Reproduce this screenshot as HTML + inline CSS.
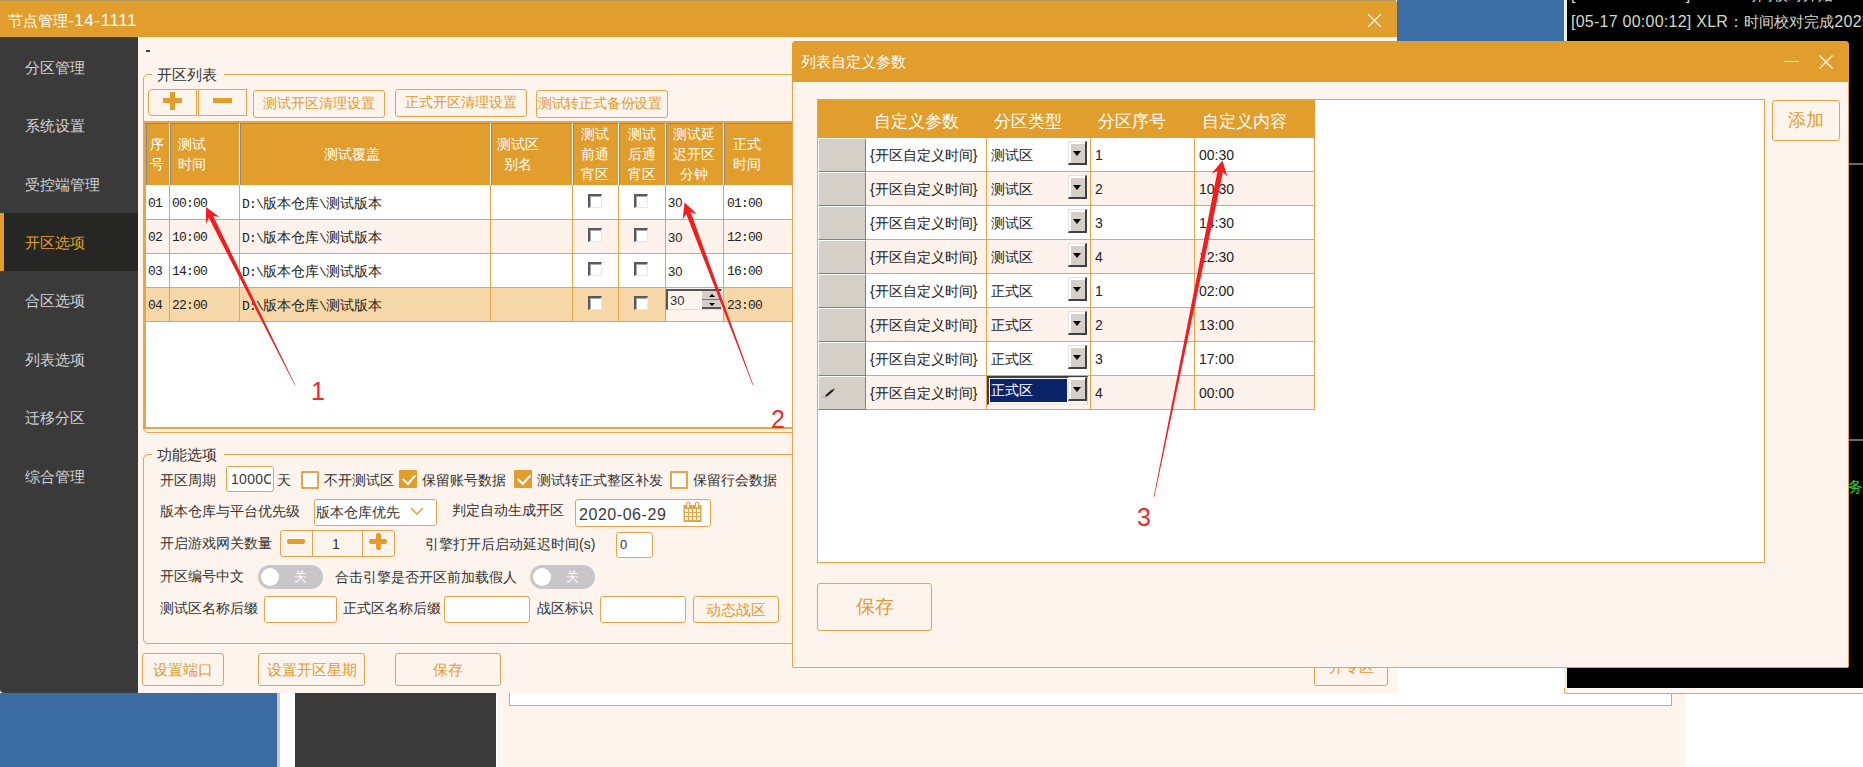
<!DOCTYPE html>
<html><head><meta charset="utf-8">
<style>
*{box-sizing:border-box;margin:0;padding:0}
html,body{width:1863px;height:767px;overflow:hidden}
body{position:relative;background:#fff;font-family:"Liberation Sans",sans-serif;color:#333}
.a{position:absolute}
.or{background:#E29E2C}
.pe{background:#FDF4EE}
.t{position:absolute;white-space:nowrap;line-height:1}
.btn{position:absolute;border:1px solid #E6A54A;border-radius:3px;background:#FDF4EE;color:#E39C30;font-size:14px;text-align:center;white-space:nowrap}
.side{position:absolute;left:25px;color:#d2d2d2;font-size:15px;white-space:nowrap;line-height:1}
.ms{font-family:"Liberation Mono",monospace;font-size:13px;letter-spacing:-0.8px;color:#222}
.ms i{font-style:normal;letter-spacing:0;font-size:14px}
.cb{position:absolute;width:14px;height:14px;background:#fff;border-top:2px solid #5a5a5a;border-left:2px solid #5a5a5a;border-right:1px solid #e8e8e8;border-bottom:1px solid #e8e8e8;box-shadow:inset 1px 1px 0 #aaa}
.lb{position:absolute;white-space:nowrap;line-height:1;font-size:14px;color:#333}
.inp{position:absolute;background:#fff;border:1px solid #E6A54A;border-radius:3px}
.ocb{position:absolute;width:18px;height:18px;border:2px solid #E6A54A;border-radius:1px;background:#fff}
.ocb.on{background:#E29E2C;border-color:#E29E2C}
.ocb.on::after{content:"";position:absolute;left:4px;top:0px;width:6px;height:10px;border-right:2.5px solid #fff;border-bottom:2.5px solid #fff;transform:rotate(42deg)}
.tg{position:absolute;width:65px;height:24px;border-radius:12px;background:#C8C6C8;color:#fff;font-size:13px;line-height:24px;text-align:right;padding-right:16px}
.tg span{position:absolute;left:3px;top:3px;width:18px;height:18px;border-radius:9px;background:#fff}
.gt{position:absolute;white-space:nowrap;line-height:1;font-size:14px;color:#222}
.dd{position:absolute;width:19px;height:24px;background:#D4D0C8;border-top:1px solid #e4e2dc;border-left:1px solid #e4e2dc;border-right:2px solid #404040;border-bottom:2px solid #404040;box-shadow:inset 2px 2px 0 #fff}
.dd::after{content:"";position:absolute;left:4px;top:9px;border-left:4px solid transparent;border-right:4px solid transparent;border-top:5px solid #000}
</style></head><body>

<!-- desktop background -->
<div class="a" style="left:1397px;top:0;width:167px;height:41px;background:#3A6EA5"></div>
<div class="a" style="left:1564px;top:0;width:3px;height:692px;background:#f3eee2"></div>
<div class="a" style="left:1567px;top:0;width:296px;height:688px;background:#000"></div>
<div class="t" style="left:1571px;top:-13px;font-size:16px;letter-spacing:0.25px;color:#d8d8c8">[05-17 00:00:11] XLR：<span style="font-size:15px;letter-spacing:0">时间校对开始2025</span></div>
<div class="t" style="left:1571px;top:14px;font-size:16px;letter-spacing:0.25px;color:#d8d8c8">[05-17 00:00:12] XLR：<span style="font-size:15px;letter-spacing:0">时间校对完成</span>2025</div>
<div class="a" style="left:1848px;top:163px;width:15px;height:2px;background:#6a6a6a"></div>
<div class="a" style="left:1848px;top:439px;width:15px;height:2px;background:#6a6a6a"></div>
<div class="t" style="left:1848px;top:479px;font-size:15px;color:#22dd22">务器</div>

<!-- bottom strip -->
<div class="a" style="left:0;top:693px;width:277px;height:74px;background:#3A6CA3"></div>
<div class="a" style="left:277px;top:693px;width:3px;height:74px;background:#c9c9c9"></div>
<div class="a" style="left:280px;top:693px;width:15px;height:74px;background:#fff"></div>
<div class="a" style="left:295px;top:693px;width:201px;height:74px;background:#3A3A3A"></div>
<div class="a" style="left:497px;top:693px;width:1188px;height:74px;background:#FDF4EE"></div>
<div class="a" style="left:509px;top:693px;width:1163px;height:13px;background:#fff;border:1px solid #E6A54A;border-top:none"></div>

<div class="a" style="left:1564px;top:688px;width:299px;height:6px;background:#FDF6F2;border-left:1px solid #E6A54A;border-bottom:1px solid #E6A54A;border-bottom-left-radius:3px"></div>
<!-- main window -->
<div class="a or" style="left:0;top:0;width:1397px;height:37px;border-top-right-radius:3px"></div>
<div class="a" style="left:0;top:0;width:1396px;height:1px;background:#b89a5e"></div>
<div class="t" style="left:8px;top:12px;font-size:15px;color:#fff">节点管理<span style="font-size:17px;letter-spacing:0.6px">-14-1111</span></div>
<svg class="a" style="left:1367px;top:13px" width="15" height="15"><path d="M1 1L14 14M14 1L1 14" stroke="#fff" stroke-width="1.1" opacity="0.92"/></svg>
<div class="a" style="left:0;top:37px;width:138px;height:656px;border-bottom-left-radius:4px;background:#3A3A3A"></div>
<div class="a pe" style="left:138px;top:37px;width:1259px;height:656px;border-bottom-left-radius:0"></div>

<div class="side" style="top:60px">分区管理</div>
<div class="side" style="top:118px">系统设置</div>
<div class="side" style="top:177px">受控端管理</div>
<div class="a" style="left:0;top:213px;width:138px;height:58px;background:#262624"></div>
<div class="a or" style="left:0;top:213px;width:4px;height:58px"></div>
<div class="side" style="top:235px;color:#E29E2C">开区选项</div>
<div class="side" style="top:293px">合区选项</div>
<div class="side" style="top:352px">列表选项</div>
<div class="side" style="top:410px">迁移分区</div>
<div class="side" style="top:469px">综合管理</div>


<!-- content: -->
<div class="a" style="left:146px;top:50px;width:4px;height:2px;background:#444"></div>

<!-- group 开区列表 -->
<div class="a" style="left:143px;top:74px;width:660px;height:359px;border:1px solid #E6A54A;border-radius:5px"></div>
<div class="a pe" style="left:152px;top:66px;width:72px;height:14px"></div>
<div class="t" style="left:157px;top:67px;font-size:15px;color:#333">开区列表</div>

<!-- +/- buttons -->
<div class="a" style="left:148px;top:89px;width:49px;height:27px;border:1px solid #E6A54A;border-radius:4px 0 0 4px"></div>
<div class="a" style="left:198px;top:89px;width:49px;height:27px;border:1px solid #E6A54A;border-radius:0 0 0 0"></div>
<div class="a or" style="left:163px;top:98px;width:19px;height:5px"></div>
<div class="a or" style="left:170px;top:92px;width:5px;height:18px"></div>
<div class="a or" style="left:213px;top:98px;width:19px;height:5px"></div>

<div class="btn" style="left:253px;top:90px;width:132px;height:28px;font-size:14.2px;line-height:25px">测试开区清理设置</div>
<div class="btn" style="left:395px;top:89px;width:132px;height:28px;font-size:14.2px;line-height:25px">正式开区清理设置</div>
<div class="btn" style="left:536px;top:90px;width:132px;height:28px;font-size:14.2px;line-height:25px;letter-spacing:-0.2px;overflow:hidden;text-indent:-4px">测试转正式备份设置</div>

<!-- main table -->
<div class="a" style="left:143px;top:121px;width:660px;height:308px;background:#fff;border:2px solid #E6A54A;border-left:3px solid #E6A54A"></div>
<div class="a or" style="left:145px;top:123px;width:650px;height:62px;border-top:1px solid #8a8a8a"></div>
<div class="a" style="left:146px;top:123px;width:1px;height:62px;background:#8a8a8a"></div>
<div class="a" style="left:169px;top:123px;width:1px;height:62px;background:#fff"></div>
<div class="a" style="left:170px;top:123px;width:1px;height:62px;background:#8a8a8a"></div>
<div class="a" style="left:239px;top:123px;width:1px;height:62px;background:#fff"></div>
<div class="a" style="left:240px;top:123px;width:1px;height:62px;background:#8a8a8a"></div>
<div class="a" style="left:490px;top:123px;width:1px;height:62px;background:#fff"></div>
<div class="a" style="left:491px;top:123px;width:1px;height:62px;background:#8a8a8a"></div>
<div class="a" style="left:572px;top:123px;width:1px;height:62px;background:#fff"></div>
<div class="a" style="left:573px;top:123px;width:1px;height:62px;background:#8a8a8a"></div>
<div class="a" style="left:618px;top:123px;width:1px;height:62px;background:#fff"></div>
<div class="a" style="left:619px;top:123px;width:1px;height:62px;background:#8a8a8a"></div>
<div class="a" style="left:665px;top:123px;width:1px;height:62px;background:#fff"></div>
<div class="a" style="left:666px;top:123px;width:1px;height:62px;background:#8a8a8a"></div>
<div class="a" style="left:723px;top:123px;width:1px;height:62px;background:#fff"></div>
<div class="a" style="left:724px;top:123px;width:1px;height:62px;background:#8a8a8a"></div>
<div class="a" style="left:146px;top:185px;width:649px;height:35px;background:#fff;border-bottom:1px solid #E6A54A"></div>
<div class="a" style="left:146px;top:220px;width:649px;height:34px;background:#FDF3EC;border-bottom:1px solid #E6A54A"></div>
<div class="a" style="left:146px;top:254px;width:649px;height:34px;background:#fff;border-bottom:1px solid #E6A54A"></div>
<div class="a" style="left:146px;top:288px;width:649px;height:34px;background:#F6D8A8;border-bottom:1px solid #E6A54A"></div>
<div class="a" style="left:169px;top:185px;width:1px;height:137px;background:#E6A54A"></div>
<div class="a" style="left:239px;top:185px;width:1px;height:137px;background:#E6A54A"></div>
<div class="a" style="left:490px;top:185px;width:1px;height:137px;background:#E6A54A"></div>
<div class="a" style="left:572px;top:185px;width:1px;height:137px;background:#E6A54A"></div>
<div class="a" style="left:618px;top:185px;width:1px;height:137px;background:#E6A54A"></div>
<div class="a" style="left:665px;top:185px;width:1px;height:137px;background:#E6A54A"></div>
<div class="a" style="left:723px;top:185px;width:1px;height:137px;background:#E6A54A"></div>
<div class="t" style="left:117px;width:80px;text-align:center;top:137px;font-size:14px;color:#fff">序</div>
<div class="t" style="left:117px;width:80px;text-align:center;top:157px;font-size:14px;color:#fff">号</div>
<div class="t" style="left:152px;width:80px;text-align:center;top:137px;font-size:14px;color:#fff">测试</div>
<div class="t" style="left:152px;width:80px;text-align:center;top:157px;font-size:14px;color:#fff">时间</div>
<div class="t" style="left:312px;width:80px;text-align:center;top:147px;font-size:14px;color:#fff">测试覆盖</div>
<div class="t" style="left:478px;width:80px;text-align:center;top:137px;font-size:14px;color:#fff">测试区</div>
<div class="t" style="left:478px;width:80px;text-align:center;top:157px;font-size:14px;color:#fff">别名</div>
<div class="t" style="left:555px;width:80px;text-align:center;top:127px;font-size:14px;color:#fff">测试</div>
<div class="t" style="left:555px;width:80px;text-align:center;top:147px;font-size:14px;color:#fff">前通</div>
<div class="t" style="left:555px;width:80px;text-align:center;top:167px;font-size:14px;color:#fff">宵区</div>
<div class="t" style="left:602px;width:80px;text-align:center;top:127px;font-size:14px;color:#fff">测试</div>
<div class="t" style="left:602px;width:80px;text-align:center;top:147px;font-size:14px;color:#fff">后通</div>
<div class="t" style="left:602px;width:80px;text-align:center;top:167px;font-size:14px;color:#fff">宵区</div>
<div class="t" style="left:654px;width:80px;text-align:center;top:127px;font-size:14px;color:#fff">测试延</div>
<div class="t" style="left:654px;width:80px;text-align:center;top:147px;font-size:14px;color:#fff">迟开区</div>
<div class="t" style="left:654px;width:80px;text-align:center;top:167px;font-size:14px;color:#fff">分钟</div>
<div class="t" style="left:707px;width:80px;text-align:center;top:137px;font-size:14px;color:#fff">正式</div>
<div class="t" style="left:707px;width:80px;text-align:center;top:157px;font-size:14px;color:#fff">时间</div>
<div class="t ms" style="left:148px;top:197px">01</div>
<div class="t ms" style="left:172px;top:197px">00:00</div>
<div class="t ms" style="left:242px;top:197px">D:\<i>版本仓库</i>\<i>测试版本</i></div>
<div class="t ms" style="left:668px;top:196px;font-family:'Liberation Sans',sans-serif;font-size:13px;letter-spacing:0">30</div>
<div class="t ms" style="left:727px;top:197px">01:00</div>
<div class="cb" style="left:588px;top:194px"></div>
<div class="cb" style="left:634px;top:194px"></div>
<div class="t ms" style="left:148px;top:231px">02</div>
<div class="t ms" style="left:172px;top:231px">10:00</div>
<div class="t ms" style="left:242px;top:231px">D:\<i>版本仓库</i>\<i>测试版本</i></div>
<div class="t ms" style="left:668px;top:231px;font-family:'Liberation Sans',sans-serif;font-size:13px;letter-spacing:0">30</div>
<div class="t ms" style="left:727px;top:231px">12:00</div>
<div class="cb" style="left:588px;top:228px"></div>
<div class="cb" style="left:634px;top:228px"></div>
<div class="t ms" style="left:148px;top:265px">03</div>
<div class="t ms" style="left:172px;top:265px">14:00</div>
<div class="t ms" style="left:242px;top:265px">D:\<i>版本仓库</i>\<i>测试版本</i></div>
<div class="t ms" style="left:668px;top:265px;font-family:'Liberation Sans',sans-serif;font-size:13px;letter-spacing:0">30</div>
<div class="t ms" style="left:727px;top:265px">16:00</div>
<div class="cb" style="left:588px;top:262px"></div>
<div class="cb" style="left:634px;top:262px"></div>
<div class="t ms" style="left:148px;top:299px">04</div>
<div class="t ms" style="left:172px;top:299px">22:00</div>
<div class="t ms" style="left:242px;top:299px">D:\<i>版本仓库</i>\<i>测试版本</i></div>
<div class="t ms" style="left:727px;top:299px">23:00</div>
<div class="cb" style="left:588px;top:296px"></div>
<div class="cb" style="left:634px;top:296px"></div>
<div class="a" style="left:666px;top:288px;width:57px;height:33px;background:#FDF4EE"></div>
<div class="a" style="left:666px;top:289px;width:56px;height:21px;background:#FDF4EE;border-top:2px solid #555;border-left:2px solid #555;border-right:1px solid #ddd;border-bottom:1px solid #ddd"></div>
<div class="t" style="left:670px;top:294px;font-size:13px;color:#333">30</div>
<div class="a" style="left:702px;top:291px;width:19px;height:9px;background:#d4d0c8;border-bottom:1px solid #777"></div>
<div class="a" style="left:702px;top:300px;width:19px;height:9px;background:#d4d0c8;border-bottom:2px solid #555"></div>
<div class="a" style="left:709px;top:294px;width:0;height:0;border-left:3px solid transparent;border-right:3px solid transparent;border-bottom:3px solid #000"></div>
<div class="a" style="left:709px;top:303px;width:0;height:0;border-left:3px solid transparent;border-right:3px solid transparent;border-top:3px solid #000"></div>

<!-- group 功能选项 -->
<div class="a" style="left:143px;top:454px;width:660px;height:190px;border:1px solid #E6A54A;border-radius:5px"></div>
<div class="a pe" style="left:152px;top:446px;width:72px;height:14px"></div>
<div class="t" style="left:157px;top:447px;font-size:15px;color:#333">功能选项</div>

<div class="lb" style="left:160px;top:473px">开区周期</div>
<div class="inp" style="left:226px;top:466px;width:48px;height:26px"></div>
<div class="t" style="left:231px;top:472px;width:40px;overflow:hidden;font-size:14px;color:#3a3a3a;letter-spacing:0.3px">1000C</div>
<div class="lb" style="left:277px;top:473px">天</div>
<div class="ocb" style="left:301px;top:471px"></div>
<div class="lb" style="left:324px;top:473px">不开测试区</div>
<div class="ocb on" style="left:399px;top:470px"></div>
<div class="lb" style="left:422px;top:473px">保留账号数据</div>
<div class="ocb on" style="left:514px;top:470px"></div>
<div class="lb" style="left:537px;top:473px">测试转正式整区补发</div>
<div class="ocb" style="left:670px;top:471px"></div>
<div class="lb" style="left:693px;top:473px">保留行会数据</div>

<div class="lb" style="left:160px;top:504px">版本仓库与平台优先级</div>
<div class="inp" style="left:314px;top:499px;width:123px;height:27px"></div>
<div class="t" style="left:316px;top:505px;font-size:14px;color:#333">版本仓库优先</div>
<svg class="a" style="left:409px;top:505px" width="16" height="12"><path d="M2 3 L8 9 L14 3" fill="none" stroke="#E6A54A" stroke-width="1.6"/></svg>
<div class="lb" style="left:452px;top:503px">判定自动生成开区</div>
<div class="inp" style="left:575px;top:499px;width:136px;height:28px"></div>
<div class="t" style="left:579px;top:507px;font-size:16px;color:#3a3a3a;letter-spacing:0.55px">2020-06-29</div>
<svg class="a" style="left:683px;top:501px" width="20" height="22"><rect x="0.5" y="4" width="18" height="17" fill="#E6A54A"/><g fill="#fff"><rect x="2" y="8" width="3" height="3"/><rect x="6" y="8" width="3" height="3"/><rect x="10" y="8" width="3" height="3"/><rect x="14" y="8" width="3" height="3"/><rect x="2" y="12" width="3" height="3"/><rect x="6" y="12" width="3" height="3"/><rect x="10" y="12" width="3" height="3"/><rect x="14" y="12" width="3" height="3"/><rect x="2" y="16" width="3" height="3"/><rect x="6" y="16" width="3" height="3"/><rect x="10" y="16" width="3" height="3"/><rect x="14" y="16" width="3" height="3"/></g><rect x="3.5" y="1" width="3" height="6" rx="1.5" fill="#fff" stroke="#E6A54A" stroke-width="1.2"/><rect x="12.5" y="1" width="3" height="6" rx="1.5" fill="#fff" stroke="#E6A54A" stroke-width="1.2"/></svg>

<div class="lb" style="left:160px;top:536px">开启游戏网关数量</div>
<div class="inp" style="left:280px;top:530px;width:115px;height:27px;background:#FDF4EE"></div>
<div class="a" style="left:312px;top:530px;width:1px;height:27px;background:#E6A54A"></div>
<div class="a" style="left:362px;top:530px;width:1px;height:27px;background:#E6A54A"></div>
<div class="a or" style="left:287px;top:539px;width:18px;height:5px;border-radius:2px"></div>
<div class="a or" style="left:369px;top:539px;width:18px;height:5px;border-radius:2px"></div>
<div class="a or" style="left:376px;top:533px;width:5px;height:17px;border-radius:2px"></div>
<div class="t" style="left:332px;top:537px;font-size:14px;color:#333">1</div>
<div class="lb" style="left:425px;top:537px">引擎打开后启动延迟时间(s)</div>
<div class="inp" style="left:616px;top:532px;width:37px;height:26px"></div>
<div class="t" style="left:620px;top:538px;font-size:13px;color:#333">0</div>

<div class="lb" style="left:160px;top:569px">开区编号中文</div>
<div class="tg" style="left:258px;top:565px"><span></span>关</div>
<div class="lb" style="left:335px;top:570px">合击引擎是否开区前加载假人</div>
<div class="tg" style="left:530px;top:565px"><span></span>关</div>

<div class="lb" style="left:160px;top:601px">测试区名称后缀</div>
<div class="inp" style="left:264px;top:596px;width:73px;height:27px"></div>
<div class="lb" style="left:343px;top:601px">正式区名称后缀</div>
<div class="inp" style="left:444px;top:596px;width:86px;height:27px"></div>
<div class="lb" style="left:537px;top:601px">战区标识</div>
<div class="inp" style="left:600px;top:596px;width:86px;height:27px"></div>
<div class="btn" style="left:693px;top:596px;width:86px;height:27px;line-height:25px;font-size:15px">动态战区</div>

<!-- bottom buttons -->
<div class="btn" style="left:142px;top:653px;width:82px;height:33px;line-height:31px;font-size:15px">设置端口</div>
<div class="btn" style="left:258px;top:653px;width:107px;height:33px;line-height:31px;font-size:15px">设置开区星期</div>
<div class="btn" style="left:395px;top:653px;width:106px;height:33px;line-height:31px;font-size:15px">保存</div>
<div class="btn" style="left:1314px;top:650px;width:74px;height:36px;line-height:31px;font-size:15px">开专区</div>

<!-- dialog -->
<div class="a pe" style="left:792px;top:41px;width:1057px;height:627px;border:1px solid #E6A54A;border-radius:4px 4px 2px 2px"></div>
<div class="a or" style="left:792px;top:41px;width:1057px;height:41px;border-radius:4px 4px 0 0"></div>
<div class="t" style="left:801px;top:54px;font-size:15px;color:#fff">列表自定义参数</div>
<div class="a" style="left:1784px;top:61px;width:15px;height:1px;background:#fff"></div>
<svg class="a" style="left:1819px;top:55px" width="14" height="14"><path d="M0.5 0.5L13.5 13.5M13.5 0.5L0.5 13.5" stroke="#fff" stroke-width="1.2"/></svg>
<div class="btn" style="left:1772px;top:100px;width:68px;height:41px;line-height:39px;font-size:18px">添加</div>
<div class="a" style="left:817px;top:99px;width:948px;height:464px;background:#fff;border:1px solid #E6A54A"></div>
<div class="a or" style="left:818px;top:100px;width:497px;height:38px"></div>
<div class="btn" style="left:817px;top:583px;width:115px;height:48px;line-height:46px;font-size:18.5px">保存</div>

<div class="t" style="left:874px;top:114px;font-size:16.7px;color:#fff">自定义参数</div>
<div class="t" style="left:994px;top:114px;font-size:16.7px;color:#fff">分区类型</div>
<div class="t" style="left:1098px;top:114px;font-size:16.7px;color:#fff">分区序号</div>
<div class="t" style="left:1202px;top:114px;font-size:16.7px;color:#fff">自定义内容</div>
<div class="a" style="left:866px;top:138px;width:449px;height:34px;background:#fff;border-bottom:1px solid #E6A54A;border-right:1px solid #E6A54A"></div>
<div class="a" style="left:818px;top:138px;width:48px;height:34px;background:#D4D0C8;border-left:1px solid #fff;border-top:1px solid #fff;border-right:1px solid #808080;border-bottom:1px solid #808080"></div>
<div class="a" style="left:986px;top:138px;width:1px;height:34px;background:#E6A54A"></div>
<div class="a" style="left:1090px;top:138px;width:1px;height:34px;background:#E6A54A"></div>
<div class="a" style="left:1194px;top:138px;width:1px;height:34px;background:#E6A54A"></div>
<div class="gt" style="left:870px;top:148px">{开区自定义时间}</div>
<div class="gt" style="left:991px;top:148px">测试区</div>
<div class="dd" style="left:1068px;top:141px"></div>
<div class="gt" style="left:1095px;top:148px">1</div>
<div class="gt" style="left:1199px;top:148px">00:30</div>
<div class="a" style="left:866px;top:172px;width:449px;height:34px;background:#FDF3EC;border-bottom:1px solid #E6A54A;border-right:1px solid #E6A54A"></div>
<div class="a" style="left:818px;top:172px;width:48px;height:34px;background:#D4D0C8;border-left:1px solid #fff;border-top:1px solid #fff;border-right:1px solid #808080;border-bottom:1px solid #808080"></div>
<div class="a" style="left:986px;top:172px;width:1px;height:34px;background:#E6A54A"></div>
<div class="a" style="left:1090px;top:172px;width:1px;height:34px;background:#E6A54A"></div>
<div class="a" style="left:1194px;top:172px;width:1px;height:34px;background:#E6A54A"></div>
<div class="gt" style="left:870px;top:182px">{开区自定义时间}</div>
<div class="gt" style="left:991px;top:182px">测试区</div>
<div class="dd" style="left:1068px;top:175px"></div>
<div class="gt" style="left:1095px;top:182px">2</div>
<div class="gt" style="left:1199px;top:182px">10:30</div>
<div class="a" style="left:866px;top:206px;width:449px;height:34px;background:#fff;border-bottom:1px solid #E6A54A;border-right:1px solid #E6A54A"></div>
<div class="a" style="left:818px;top:206px;width:48px;height:34px;background:#D4D0C8;border-left:1px solid #fff;border-top:1px solid #fff;border-right:1px solid #808080;border-bottom:1px solid #808080"></div>
<div class="a" style="left:986px;top:206px;width:1px;height:34px;background:#E6A54A"></div>
<div class="a" style="left:1090px;top:206px;width:1px;height:34px;background:#E6A54A"></div>
<div class="a" style="left:1194px;top:206px;width:1px;height:34px;background:#E6A54A"></div>
<div class="gt" style="left:870px;top:216px">{开区自定义时间}</div>
<div class="gt" style="left:991px;top:216px">测试区</div>
<div class="dd" style="left:1068px;top:209px"></div>
<div class="gt" style="left:1095px;top:216px">3</div>
<div class="gt" style="left:1199px;top:216px">14:30</div>
<div class="a" style="left:866px;top:240px;width:449px;height:34px;background:#FDF3EC;border-bottom:1px solid #E6A54A;border-right:1px solid #E6A54A"></div>
<div class="a" style="left:818px;top:240px;width:48px;height:34px;background:#D4D0C8;border-left:1px solid #fff;border-top:1px solid #fff;border-right:1px solid #808080;border-bottom:1px solid #808080"></div>
<div class="a" style="left:986px;top:240px;width:1px;height:34px;background:#E6A54A"></div>
<div class="a" style="left:1090px;top:240px;width:1px;height:34px;background:#E6A54A"></div>
<div class="a" style="left:1194px;top:240px;width:1px;height:34px;background:#E6A54A"></div>
<div class="gt" style="left:870px;top:250px">{开区自定义时间}</div>
<div class="gt" style="left:991px;top:250px">测试区</div>
<div class="dd" style="left:1068px;top:243px"></div>
<div class="gt" style="left:1095px;top:250px">4</div>
<div class="gt" style="left:1199px;top:250px">12:30</div>
<div class="a" style="left:866px;top:274px;width:449px;height:34px;background:#fff;border-bottom:1px solid #E6A54A;border-right:1px solid #E6A54A"></div>
<div class="a" style="left:818px;top:274px;width:48px;height:34px;background:#D4D0C8;border-left:1px solid #fff;border-top:1px solid #fff;border-right:1px solid #808080;border-bottom:1px solid #808080"></div>
<div class="a" style="left:986px;top:274px;width:1px;height:34px;background:#E6A54A"></div>
<div class="a" style="left:1090px;top:274px;width:1px;height:34px;background:#E6A54A"></div>
<div class="a" style="left:1194px;top:274px;width:1px;height:34px;background:#E6A54A"></div>
<div class="gt" style="left:870px;top:284px">{开区自定义时间}</div>
<div class="gt" style="left:991px;top:284px">正式区</div>
<div class="dd" style="left:1068px;top:277px"></div>
<div class="gt" style="left:1095px;top:284px">1</div>
<div class="gt" style="left:1199px;top:284px">02:00</div>
<div class="a" style="left:866px;top:308px;width:449px;height:34px;background:#FDF3EC;border-bottom:1px solid #E6A54A;border-right:1px solid #E6A54A"></div>
<div class="a" style="left:818px;top:308px;width:48px;height:34px;background:#D4D0C8;border-left:1px solid #fff;border-top:1px solid #fff;border-right:1px solid #808080;border-bottom:1px solid #808080"></div>
<div class="a" style="left:986px;top:308px;width:1px;height:34px;background:#E6A54A"></div>
<div class="a" style="left:1090px;top:308px;width:1px;height:34px;background:#E6A54A"></div>
<div class="a" style="left:1194px;top:308px;width:1px;height:34px;background:#E6A54A"></div>
<div class="gt" style="left:870px;top:318px">{开区自定义时间}</div>
<div class="gt" style="left:991px;top:318px">正式区</div>
<div class="dd" style="left:1068px;top:311px"></div>
<div class="gt" style="left:1095px;top:318px">2</div>
<div class="gt" style="left:1199px;top:318px">13:00</div>
<div class="a" style="left:866px;top:342px;width:449px;height:34px;background:#fff;border-bottom:1px solid #E6A54A;border-right:1px solid #E6A54A"></div>
<div class="a" style="left:818px;top:342px;width:48px;height:34px;background:#D4D0C8;border-left:1px solid #fff;border-top:1px solid #fff;border-right:1px solid #808080;border-bottom:1px solid #808080"></div>
<div class="a" style="left:986px;top:342px;width:1px;height:34px;background:#E6A54A"></div>
<div class="a" style="left:1090px;top:342px;width:1px;height:34px;background:#E6A54A"></div>
<div class="a" style="left:1194px;top:342px;width:1px;height:34px;background:#E6A54A"></div>
<div class="gt" style="left:870px;top:352px">{开区自定义时间}</div>
<div class="gt" style="left:991px;top:352px">正式区</div>
<div class="dd" style="left:1068px;top:345px"></div>
<div class="gt" style="left:1095px;top:352px">3</div>
<div class="gt" style="left:1199px;top:352px">17:00</div>
<div class="a" style="left:866px;top:376px;width:449px;height:34px;background:#FDF3EC;border-bottom:1px solid #E6A54A;border-right:1px solid #E6A54A"></div>
<div class="a" style="left:818px;top:376px;width:48px;height:34px;background:#D4D0C8;border-left:1px solid #fff;border-top:1px solid #fff;border-right:1px solid #808080;border-bottom:1px solid #808080"></div>
<div class="a" style="left:986px;top:376px;width:1px;height:34px;background:#E6A54A"></div>
<div class="a" style="left:1090px;top:376px;width:1px;height:34px;background:#E6A54A"></div>
<div class="a" style="left:1194px;top:376px;width:1px;height:34px;background:#E6A54A"></div>
<div class="gt" style="left:870px;top:386px">{开区自定义时间}</div>
<div class="a" style="left:987px;top:376px;width:101px;height:29px;border-top:2px solid #404040;border-left:2px solid #404040;border-right:1px solid #d4d0c8;border-bottom:1px solid #e8e8e8;background:#f4f4f4"></div>
<div class="a" style="left:990px;top:379px;width:77px;height:23px;background:#0A246A"></div>
<div class="gt" style="left:991px;top:383px;color:#fff">正式区</div>
<div class="dd" style="left:1068px;top:377px"></div>
<div class="gt" style="left:1095px;top:386px">4</div>
<div class="gt" style="left:1199px;top:386px">00:00</div>
<svg class="a" style="left:822px;top:386px" width="14" height="12"><path d="M4 10 L11 4" stroke="#1a1a1a" stroke-width="2.2"/><path d="M11 4 L12.5 2.8" stroke="#555" stroke-width="1.5"/><path d="M1 11h3" stroke="#999" stroke-width="1"/></svg>
<!-- red arrows -->
<svg class="a" style="left:0;top:0" width="1863" height="767"><g fill="#F01E1E"><polygon points="206.0,207.0 219.4,217.1 213.2,216.0 295.3,384.9 294.7,385.1 208.9,218.1 206.0,223.8"/><polygon points="684.5,202.5 696.8,213.9 690.7,212.2 753.3,384.9 752.7,385.1 686.2,213.9 682.7,219.2"/><polygon points="1222.5,160.5 1227.3,176.8 1223.0,172.1 1154.3,497.1 1153.7,496.9 1217.5,171.0 1211.7,173.6"/></g></svg>
<div class="t" style="left:311px;top:379px;font-size:25px;color:#EE2A2A">1</div>
<div class="t" style="left:771px;top:407px;font-size:25px;color:#EE2A2A">2</div>
<div class="t" style="left:1137px;top:505px;font-size:25px;color:#EE2A2A">3</div>

</body></html>
